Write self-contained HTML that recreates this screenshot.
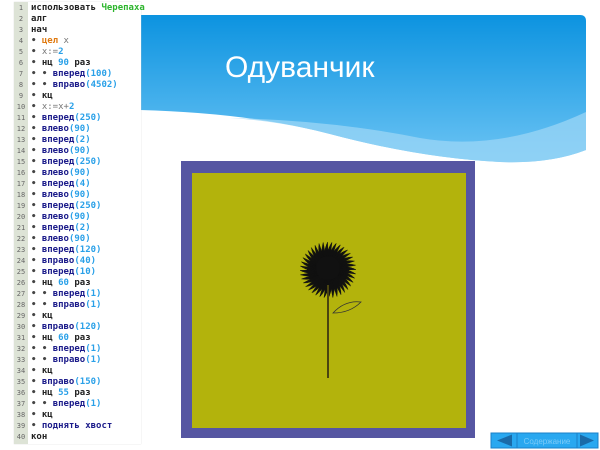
<!DOCTYPE html>
<html><head><meta charset="utf-8"><style>
*{margin:0;padding:0;box-sizing:border-box}
body{width:600px;height:450px;background:#fff;position:relative;overflow:hidden;font-family:"Liberation Sans","DejaVu Sans",sans-serif}
#code{position:absolute;left:14px;top:2px;width:127px;height:442px;background:#fff;box-shadow:0 0 1px #ccc}
#nums{position:absolute;left:0;top:0;width:14px;height:442px;background:#dde3d6}
.ln{position:absolute;left:0;width:127px;height:11px;font:bold 9px/11px "DejaVu Sans Mono","Liberation Mono",monospace;white-space:pre;color:#222}
.ln b{display:inline-block;width:14px;text-align:center;font-weight:normal;font-size:7px;color:#666}
.ln span.t{margin-left:3px}
.k{color:#1b1b8a}.n{color:#29a0e8}.g{color:#2db52d}.o{color:#e07a10}.v{color:#777;font-weight:normal}.d{color:#444}
</style></head><body>
<svg style="position:absolute;left:0;top:0" width="600" height="450">
<defs><linearGradient id="bg" x1="0" y1="0" x2="0" y2="1"><stop offset="0" stop-color="#0c93e0"/><stop offset="1" stop-color="#6cc4f4"/></linearGradient></defs>
<path d="M140 15 H580 Q586 15 586 21 V150 Q550 164 500 162 Q420 158 330 134 Q250 113 140 110 Z" fill="url(#bg)"/>
<path d="M230 118 Q330 120 420 138 Q500 152 586 112 V150 Q550 164 500 162 Q420 158 330 134 Q280 121 230 118Z" fill="#9bd6f6" opacity=".75"/>
<rect x="181" y="161" width="294" height="277" fill="#5656a2"/>
<rect x="192" y="173" width="274" height="255" fill="#b3b30c"/>
<g stroke="#111" stroke-width="0.7" id="fl"></g>
<circle cx="328" cy="268" r="12" fill="#111"/>
<line x1="328" y1="285" x2="328" y2="378" stroke="#4a4410" stroke-width="2"/>
<path d="M333 313 Q345 300 361 302 Q350 313 333 313Z" fill="none" stroke="#333" stroke-width="0.8"/>
<rect x="491" y="433" width="26" height="15" fill="#29a8f0" stroke="#1a80c8"/>
<path d="M497 440.5 L512 434.5 V446.5Z" fill="#1a6aa8"/>
<rect x="517" y="433" width="60" height="15" fill="#29a8f0" stroke="#1a80c8"/>
<rect x="577" y="433" width="21" height="15" fill="#29a8f0" stroke="#1a80c8"/>
<path d="M594 440.5 L580 434.5 V446.5Z" fill="#1a6aa8"/>
<text x="547" y="444" font-size="8" fill="#7ccbf8" text-anchor="middle" font-family="Liberation Sans,sans-serif">Содержание</text>
<text x="225" y="77" font-size="30" fill="#fff" font-family="Liberation Sans,DejaVu Sans,sans-serif">Одуванчик</text>
</svg>
<script>
var g=document.getElementById('fl'),s='';
for(var i=0;i<360;i++){var a=i*Math.PI/180,r=20+((i*37)%9);s+='<line x1="328" y1="270" x2="'+(328+r*Math.cos(a)).toFixed(1)+'" y2="'+(270+r*Math.sin(a)).toFixed(1)+'"/>';}
g.innerHTML=s;
</script>
<div id="code"><div id="nums"></div>
<div class="ln" style="top:1px"><b>1</b><span class="t">использовать <span class="g">Черепаха</span></span></div>
<div class="ln" style="top:12px"><b>2</b><span class="t">алг</span></div>
<div class="ln" style="top:23px"><b>3</b><span class="t">нач</span></div>
<div class="ln" style="top:34px"><b>4</b><span class="t"><span class="d">•</span> <span class="o">цел</span> <span class="v">x</span></span></div>
<div class="ln" style="top:45px"><b>5</b><span class="t"><span class="d">•</span> <span class="v">x:=</span><span class="n">2</span></span></div>
<div class="ln" style="top:56px"><b>6</b><span class="t"><span class="d">•</span> нц <span class="n">90</span> раз</span></div>
<div class="ln" style="top:67px"><b>7</b><span class="t"><span class="d">• •</span> <span class="k">вперед</span><span class="n">(100)</span></span></div>
<div class="ln" style="top:78px"><b>8</b><span class="t"><span class="d">• •</span> <span class="k">вправо</span><span class="n">(4502)</span></span></div>
<div class="ln" style="top:89px"><b>9</b><span class="t"><span class="d">•</span> кц</span></div>
<div class="ln" style="top:100px"><b>10</b><span class="t"><span class="d">•</span> <span class="v">x:=x+</span><span class="n">2</span></span></div>
<div class="ln" style="top:111px"><b>11</b><span class="t"><span class="d">•</span> <span class="k">вперед</span><span class="n">(250)</span></span></div>
<div class="ln" style="top:122px"><b>12</b><span class="t"><span class="d">•</span> <span class="k">влево</span><span class="n">(90)</span></span></div>
<div class="ln" style="top:133px"><b>13</b><span class="t"><span class="d">•</span> <span class="k">вперед</span><span class="n">(2)</span></span></div>
<div class="ln" style="top:144px"><b>14</b><span class="t"><span class="d">•</span> <span class="k">влево</span><span class="n">(90)</span></span></div>
<div class="ln" style="top:155px"><b>15</b><span class="t"><span class="d">•</span> <span class="k">вперед</span><span class="n">(250)</span></span></div>
<div class="ln" style="top:166px"><b>16</b><span class="t"><span class="d">•</span> <span class="k">влево</span><span class="n">(90)</span></span></div>
<div class="ln" style="top:177px"><b>17</b><span class="t"><span class="d">•</span> <span class="k">вперед</span><span class="n">(4)</span></span></div>
<div class="ln" style="top:188px"><b>18</b><span class="t"><span class="d">•</span> <span class="k">влево</span><span class="n">(90)</span></span></div>
<div class="ln" style="top:199px"><b>19</b><span class="t"><span class="d">•</span> <span class="k">вперед</span><span class="n">(250)</span></span></div>
<div class="ln" style="top:210px"><b>20</b><span class="t"><span class="d">•</span> <span class="k">влево</span><span class="n">(90)</span></span></div>
<div class="ln" style="top:221px"><b>21</b><span class="t"><span class="d">•</span> <span class="k">вперед</span><span class="n">(2)</span></span></div>
<div class="ln" style="top:232px"><b>22</b><span class="t"><span class="d">•</span> <span class="k">влево</span><span class="n">(90)</span></span></div>
<div class="ln" style="top:243px"><b>23</b><span class="t"><span class="d">•</span> <span class="k">вперед</span><span class="n">(120)</span></span></div>
<div class="ln" style="top:254px"><b>24</b><span class="t"><span class="d">•</span> <span class="k">вправо</span><span class="n">(40)</span></span></div>
<div class="ln" style="top:265px"><b>25</b><span class="t"><span class="d">•</span> <span class="k">вперед</span><span class="n">(10)</span></span></div>
<div class="ln" style="top:276px"><b>26</b><span class="t"><span class="d">•</span> нц <span class="n">60</span> раз</span></div>
<div class="ln" style="top:287px"><b>27</b><span class="t"><span class="d">• •</span> <span class="k">вперед</span><span class="n">(1)</span></span></div>
<div class="ln" style="top:298px"><b>28</b><span class="t"><span class="d">• •</span> <span class="k">вправо</span><span class="n">(1)</span></span></div>
<div class="ln" style="top:309px"><b>29</b><span class="t"><span class="d">•</span> кц</span></div>
<div class="ln" style="top:320px"><b>30</b><span class="t"><span class="d">•</span> <span class="k">вправо</span><span class="n">(120)</span></span></div>
<div class="ln" style="top:331px"><b>31</b><span class="t"><span class="d">•</span> нц <span class="n">60</span> раз</span></div>
<div class="ln" style="top:342px"><b>32</b><span class="t"><span class="d">• •</span> <span class="k">вперед</span><span class="n">(1)</span></span></div>
<div class="ln" style="top:353px"><b>33</b><span class="t"><span class="d">• •</span> <span class="k">вправо</span><span class="n">(1)</span></span></div>
<div class="ln" style="top:364px"><b>34</b><span class="t"><span class="d">•</span> кц</span></div>
<div class="ln" style="top:375px"><b>35</b><span class="t"><span class="d">•</span> <span class="k">вправо</span><span class="n">(150)</span></span></div>
<div class="ln" style="top:386px"><b>36</b><span class="t"><span class="d">•</span> нц <span class="n">55</span> раз</span></div>
<div class="ln" style="top:397px"><b>37</b><span class="t"><span class="d">• •</span> <span class="k">вперед</span><span class="n">(1)</span></span></div>
<div class="ln" style="top:408px"><b>38</b><span class="t"><span class="d">•</span> кц</span></div>
<div class="ln" style="top:419px"><b>39</b><span class="t"><span class="d">•</span> <span class="k">поднять хвост</span></span></div>
<div class="ln" style="top:430px"><b>40</b><span class="t">кон</span></div>
</div>
</body></html>
